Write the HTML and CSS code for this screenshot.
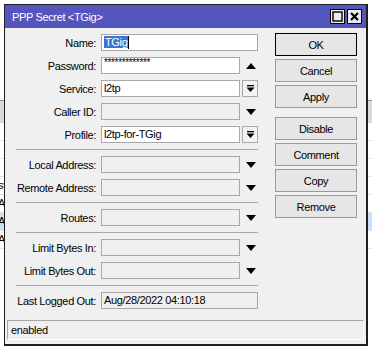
FILE: index.html
```html
<!DOCTYPE html>
<html>

<head>
    <title>PPP Secret &lt;TGig&gt;</title>
    <link rel="stylesheet" href="styles.css">
</head>

<body>
    <div class="desk">
        <!-- list behind the dialog -->
        <div class="bg-list">
            <div class="bg-head"></div>
            <div class="bg-row"></div>
            <div class="bg-row"></div>
            <div class="bg-row"></div>
            <div class="bg-row"><span class="bg-cell">st</span></div>
            <div class="bg-row"><span class="bg-cell">A</span></div>
            <div class="bg-row selected"><span class="bg-cell">A</span></div>
            <div class="bg-row"><span class="bg-cell">A</span></div>
        </div>

        <div class="win">
            <div class="titlebar">
                <span class="title">PPP Secret &lt;TGig&gt;</span>
                <span class="tb-btns">
                    <span class="tb-btn">
                        <svg width="11" height="11" viewBox="0 0 11 11"><rect x="1" y="1" width="9" height="9" fill="none" stroke="#000" stroke-width="1.4"/></svg>
                    </span>
                    <span class="tb-btn">
                        <svg width="11" height="11" viewBox="0 0 11 11"><path d="M2 2 L9 9 M9 2 L2 9" stroke="#000" stroke-width="2.2"/></svg>
                    </span>
                </span>
            </div>

            <div class="win-body">
                <div class="form">
                    <div class="row">
                        <label>Name:</label>
                        <div class="field wide"><span class="sel">TGig</span><span class="caret"></span></div>
                    </div>
                    <div class="row">
                        <label>Password:</label>
                        <div class="field stars">*************</div>
                        <span class="arrow up"></span>
                    </div>
                    <div class="row">
                        <label>Service:</label>
                        <div class="field">l2tp</div>
                        <span class="drop">
                            <svg width="9" height="9" viewBox="0 0 9 9"><rect x="1" y="1" width="7" height="1.3" fill="#000"/><path d="M0.5 3.5 H8.5 L4.5 8 Z" fill="#000"/></svg>
                        </span>
                    </div>
                    <div class="row">
                        <label>Caller ID:</label>
                        <div class="field off"></div>
                        <span class="arrow"></span>
                    </div>
                    <div class="row">
                        <label>Profile:</label>
                        <div class="field">l2tp-for-TGig</div>
                        <span class="drop">
                            <svg width="9" height="9" viewBox="0 0 9 9"><rect x="1" y="1" width="7" height="1.3" fill="#000"/><path d="M0.5 3.5 H8.5 L4.5 8 Z" fill="#000"/></svg>
                        </span>
                    </div>

                    <div class="sep"></div>

                    <div class="row">
                        <label>Local Address:</label>
                        <div class="field off"></div>
                        <span class="arrow"></span>
                    </div>
                    <div class="row">
                        <label>Remote Address:</label>
                        <div class="field off"></div>
                        <span class="arrow"></span>
                    </div>

                    <div class="sep"></div>

                    <div class="row">
                        <label>Routes:</label>
                        <div class="field off"></div>
                        <span class="arrow"></span>
                    </div>

                    <div class="sep"></div>

                    <div class="row">
                        <label>Limit Bytes In:</label>
                        <div class="field off"></div>
                        <span class="arrow"></span>
                    </div>
                    <div class="row">
                        <label>Limit Bytes Out:</label>
                        <div class="field off"></div>
                        <span class="arrow"></span>
                    </div>

                    <div class="sep"></div>

                    <div class="row">
                        <label>Last Logged Out:</label>
                        <div class="field off wide">Aug/28/2022 04:10:18</div>
                    </div>
                </div>

                <div class="actions">
                    <button class="default">OK</button>
                    <button>Cancel</button>
                    <button>Apply</button>
                    <button class="group">Disable</button>
                    <button>Comment</button>
                    <button>Copy</button>
                    <button>Remove</button>
                </div>
            </div>

            <div class="status">enabled</div>
        </div>
    </div>
</body>

</html>
```

FILE: styles.css
```css
* {
    box-sizing: border-box;
}

body {
    margin: 0;
    background: #fff;
    font-family: "Liberation Sans", Arial, sans-serif;
    font-size: 11px;
    letter-spacing: -0.35px;
    color: #000;
}

.desk {
    position: relative;
    width: 372px;
    height: 350px;
    overflow: hidden;
}

/* list behind the dialog */
.bg-list {
    padding-top: 100px;
}

.bg-head {
    height: 23px;
    border-top: 1px solid #8c8c8c;
    background: #d9d9d9;
}

.bg-row {
    height: 18px;
    border-bottom: 1px solid #e2e2e2;
    line-height: 17px;
}

.bg-row.selected {
    background: #cce0f8;
}

.bg-cell {
    display: inline-block;
    margin-left: -2px;
}

/* the dialog window */
.win {
    position: absolute;
    left: 4px;
    top: 4px;
    width: 364px;
    height: 342px;
    background: #f0f0f0;
    border: 1px solid #1e1e1e;
    border-right-width: 2px;
    border-bottom-width: 2px;
    display: flex;
    flex-direction: column;
}

.titlebar {
    height: 23px;
    background: #5555be;
    color: #fff;
    display: flex;
    align-items: center;
    justify-content: space-between;
    padding: 0 4px 0 7px;
}

.title {
    font-size: 11px;
}

.tb-btns {
    display: flex;
    gap: 2px;
}

.tb-btn {
    width: 15px;
    height: 15px;
    background: #ececec;
    border: 1px solid #000;
    display: flex;
    align-items: center;
    justify-content: center;
}

.win-body {
    display: flex;
    padding-top: 5px;
}

.form {
    margin-top: 1px;
    width: 253px;
}

.row {
    display: grid;
    grid-template-columns: 92px 139px 16px;
    height: 17px;
    margin-bottom: 6px;
    align-items: center;
}

.row label {
    text-align: right;
    padding-right: 1px;
    white-space: nowrap;
}

.field {
    margin-left: 4px;
    width: 139px;
    height: 17px;
    background: #fff;
    border: 1px solid #a8a8a8;
    padding: 0 2px;
    line-height: 15px;
    white-space: nowrap;
    overflow: hidden;
}

.field.wide {
    width: 157px;
    grid-column: 2 / 4;
}

.field.off {
    background: #f0f0f0;
}

.field.stars {
    font-size: 10px;
    line-height: 9px;
}

.sel {
    background: #3a78d0;
    color: #fff;
    padding: 0 1px;
}

.caret {
    display: inline-block;
    width: 1px;
    height: 13px;
    background: #000;
    vertical-align: -3px;
}

.drop {
    margin-left: 6px;
    width: 16px;
    height: 17px;
    border: 1px solid #a8a8a8;
    background: #f4f4f4;
    display: flex;
    align-items: center;
    justify-content: center;
}

.arrow {
    margin-left: 10px;
    width: 0;
    height: 0;
    border-left: 5px solid transparent;
    border-right: 5px solid transparent;
    border-top: 6px solid #000;
}

.arrow.up {
    border-top: 0;
    border-bottom: 6px solid #000;
}

.sep {
    margin: 1px 0 6px 11px;
    width: 242px;
    height: 1px;
    background: #a8a8a8;
}

.actions {
    margin-left: 17px;
    width: 82px;
    display: flex;
    flex-direction: column;
}

.actions button {
    height: 23px;
    margin-bottom: 3px;
    background: #e6e6e6;
    border: 1px solid #9a9a9a;
    font-family: "Liberation Sans", Arial, sans-serif;
    font-size: 11px;
    letter-spacing: -0.35px;
    color: #000;
    padding: 0;
}

.actions button.default {
    border-color: #000;
}

.actions button.group {
    margin-top: 6px;
}

.status {
    margin: auto 2px 4px 2px;
    height: 20px;
    border: 1px solid #a8a8a8;
    border-right-color: #fff;
    border-bottom-color: #fff;
    padding-left: 3px;
    line-height: 18px;
}
```
